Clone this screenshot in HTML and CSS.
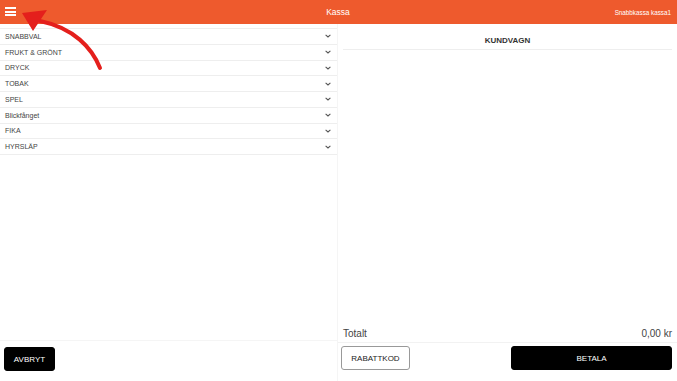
FILE: index.html
```html
<!DOCTYPE html>
<html lang="sv">
<head>
    <meta charset="UTF-8">
    <meta name="viewport" content="width=device-width, initial-scale=1.0">
    <title>Kassa</title>
    <link rel="stylesheet" href="styles.css">
</head>
<body>
    <!-- Top bar -->
    <header class="topbar">
        <div class="menu-btn">
            <span></span><span></span><span></span>
        </div>
        <div class="title">Kassa</div>
        <div class="register">Snabbkassa kassa1</div>
    </header>

    <main class="pos">
        <!-- Product categories -->
        <section class="categories">
            <ul class="cat-list">
                <li>SNABBVAL<svg class="chev" viewBox="0 0 6 4"><path d="M0.6 0.8 L3 3 L5.4 0.8"/></svg></li>
                <li>FRUKT &amp; GRÖNT<svg class="chev" viewBox="0 0 6 4"><path d="M0.6 0.8 L3 3 L5.4 0.8"/></svg></li>
                <li>DRYCK<svg class="chev" viewBox="0 0 6 4"><path d="M0.6 0.8 L3 3 L5.4 0.8"/></svg></li>
                <li>TOBAK<svg class="chev" viewBox="0 0 6 4"><path d="M0.6 0.8 L3 3 L5.4 0.8"/></svg></li>
                <li>SPEL<svg class="chev" viewBox="0 0 6 4"><path d="M0.6 0.8 L3 3 L5.4 0.8"/></svg></li>
                <li>Blickfånget<svg class="chev" viewBox="0 0 6 4"><path d="M0.6 0.8 L3 3 L5.4 0.8"/></svg></li>
                <li>FIKA<svg class="chev" viewBox="0 0 6 4"><path d="M0.6 0.8 L3 3 L5.4 0.8"/></svg></li>
                <li>HYRSLÄP<svg class="chev" viewBox="0 0 6 4"><path d="M0.6 0.8 L3 3 L5.4 0.8"/></svg></li>
            </ul>
            <div class="actions left-actions">
                <button class="btn btn-dark">AVBRYT</button>
            </div>
        </section>

        <!-- Cart -->
        <section class="cart">
            <h2 class="cart-title">KUNDVAGN</h2>
            <div class="cart-items"></div>
            <div class="total">
                <span>Totalt</span>
                <span>0,00 kr</span>
            </div>
            <div class="actions right-actions">
                <button class="btn btn-light">RABATTKOD</button>
                <button class="btn btn-dark btn-pay">BETALA</button>
            </div>
        </section>
    </main>

    <!-- Annotation arrow pointing at the menu -->
    <svg class="hint-arrow" viewBox="0 0 120 80" width="120" height="80">
        <path d="M100 68 C 92 48, 74 28, 40 21" fill="none" stroke="#e41f1c" stroke-width="4" stroke-linecap="round"/>
        <polygon points="22,13 47,10 33,31" fill="#e41f1c"/>
    </svg>
</body>
</html>
```

FILE: styles.css
```css
* {
    box-sizing: border-box;
}
body {
    margin: 0;
    width: 677px;
    height: 381px;
    font-family: "Liberation Sans", Arial, sans-serif;
    background-color: #fff;
    display: flex;
    flex-direction: column;
    overflow: hidden;
}
.topbar {
    height: 24px;
    background-color: #ee5a2d;
    color: #fff;
    display: flex;
    align-items: center;
    position: relative;
    padding: 0 6px 0 5px;
}
.menu-btn {
    width: 11px;
    display: flex;
    flex-direction: column;
    gap: 1.6px;
    margin-top: -1px;
}
.menu-btn span {
    display: block;
    height: 2px;
    background-color: #fff;
}
.title {
    flex: 1;
    text-align: center;
    font-size: 8.5px;
    margin-left: 49px;
}
.register {
    font-size: 6.3px;
    width: 60px;
    text-align: right;
}
.pos {
    flex: 1;
    display: flex;
}
.categories {
    width: 338px;
    border-right: 1px solid #f5f5f5;
    display: flex;
    flex-direction: column;
}
.cat-list {
    list-style: none;
    margin: 4px 0 0;
    padding: 0;
    flex: 1;
    border-top: 1px solid #eee;
}
.cat-list li {
    height: 15.75px;
    border-bottom: 1px solid #eee;
    display: flex;
    align-items: center;
    justify-content: space-between;
    padding: 0 6px 0 5px;
    font-size: 7px;
    color: #444;
}
.chev {
    width: 6px;
    height: 4px;
}
.chev path {
    fill: none;
    stroke: #555;
    stroke-width: 1.1;
}
.actions {
    display: flex;
    align-items: flex-start;
}
.left-actions {
    height: 41px;
    border-top: 1px solid #f5f5f5;
    padding: 6px 4px 0;
}
.cart {
    flex: 1;
    display: flex;
    flex-direction: column;
}
.cart-title {
    margin: 9px 5px 0;
    height: 17px;
    border-bottom: 1px solid #eee;
    font-size: 8px;
    font-weight: bold;
    color: #333;
    text-align: center;
    line-height: 16px;
}
.cart-items {
    flex: 1;
}
.total {
    height: 18px;
    border-bottom: 1px solid #f2f2f2;
    display: flex;
    justify-content: space-between;
    align-items: center;
    padding: 0 5px 0 5px;
    font-size: 10px;
    color: #444;
}
.right-actions {
    height: 38px;
    padding: 3px 5px 0 3px;
    justify-content: space-between;
}
.btn {
    height: 24px;
    font-family: "Liberation Sans", Arial, sans-serif;
    font-size: 8px;
    border-radius: 3px;
    padding: 0;
    cursor: pointer;
}
.btn-dark {
    background-color: #000;
    color: #fff;
    border: 1px solid #000;
    width: 51px;
}
.btn-light {
    background-color: #fff;
    color: #222;
    border: 1px solid #999;
    width: 69px;
}
.btn-pay {
    width: 161px;
}
.hint-arrow {
    position: absolute;
    left: 0;
    top: 0;
}
```
